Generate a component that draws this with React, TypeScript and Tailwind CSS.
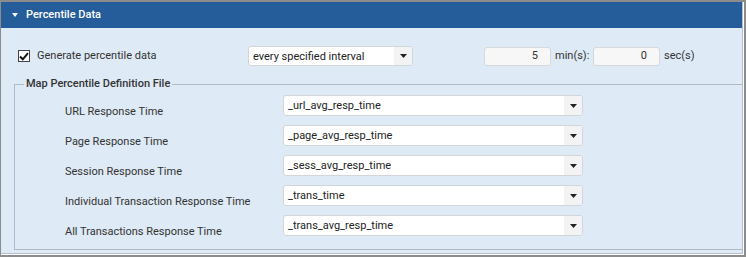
import React from 'react';

const rows = [
  { label: 'URL Response Time', value: '_url_avg_resp_time' },
  { label: 'Page Response Time', value: '_page_avg_resp_time' },
  { label: 'Session Response Time', value: '_sess_avg_resp_time' },
  { label: 'Individual Transaction Response Time', value: '_trans_time' },
  { label: 'All Transactions Response Time', value: '_trans_avg_resp_time' },
];

const Caret = () => (
  <svg width="7" height="4" viewBox="0 0 7 4">
    <path d="M0 0 H7 L3.5 4 Z" fill="#222" />
  </svg>
);

const SelectBox: React.FC<{ value: string; className: string }> = ({ value, className }) => (
  <div className={`flex bg-white border border-[#d3d6d9] rounded-[3px] overflow-hidden ${className}`}>
    <div className="flex-1 flex items-center pl-[4px] text-[11px] text-[#222] leading-none">{value}</div>
    <div className="w-[18px] bg-[#f3f3f3] flex items-center justify-center">
      <Caret />
    </div>
  </div>
);

export default function App() {
  return (
    <div
      className="w-[746px] h-[257px] border-t-2 border-l border-r-2 border-b-2 border-[#8c8c8c] bg-white pr-px pb-px flex flex-col text-[#333]"
      style={{ fontFamily: 'Roboto, "Liberation Sans", Arial, sans-serif' }}
    >
      <div className="flex-1 flex flex-col bg-[#deeaf5] border-r border-b border-[#b4c0cb]">
        {/* Header */}
        <div className="h-[26px] bg-[#255d9b] flex items-center pl-[11px] gap-[8px]">
          <svg width="6" height="4" viewBox="0 0 6 4">
            <path d="M0 0 H6 L3 4 Z" fill="#fff" />
          </svg>
          <span className="text-white text-[11px] font-medium">Percentile Data</span>
        </div>

        {/* Top row */}
        <div className="flex items-center h-[20px] mt-[18px] pl-[17px] text-[11px]">
          <div className="w-[230px] flex items-center gap-[7px]">
            <span className="w-[12px] h-[12px] border border-[#444] bg-white flex items-center justify-center">
              <svg width="10" height="9" viewBox="0 0 10 9">
                <path d="M1 4.5 L3.8 7.3 L9 1.2" stroke="#111" strokeWidth="2" fill="none" />
              </svg>
            </span>
            <span>Generate percentile data</span>
          </div>
          <SelectBox value="every specified interval" className="w-[165px] h-[20px]" />
          <div className="ml-[71px] w-[67px] h-[19px] bg-[#f7f7f7] border border-[#d6d8da] rounded-[3px] flex items-center justify-end pr-[12px]">
            5
          </div>
          <span className="w-[42px] pl-[4px]">min(s):</span>
          <div className="w-[67px] h-[19px] bg-[#f7f7f7] border border-[#d6d8da] rounded-[3px] flex items-center justify-end pr-[12px]">
            0
          </div>
          <span className="pl-[4px]">sec(s)</span>
        </div>

        {/* Fieldset */}
        <fieldset className="mt-[10px] ml-[13px] border border-r-0 border-[#b0bac4] pt-[3px] pb-[13px]">
          <legend className="ml-[9px] px-[2px] text-[11px] font-medium leading-[16px] text-[#333]">
            Map Percentile Definition File
          </legend>
          <div className="flex flex-col gap-[9px] pl-[50px]">
            {rows.map((r) => (
              <div key={r.label} className="flex h-[21px]">
                <div className="w-[218px] pt-[10px] text-[11px] leading-[14px] whitespace-nowrap">{r.label}</div>
                <SelectBox value={r.value} className="w-[300px] h-[21px]" />
              </div>
            ))}
          </div>
        </fieldset>
      </div>
    </div>
  );
}
